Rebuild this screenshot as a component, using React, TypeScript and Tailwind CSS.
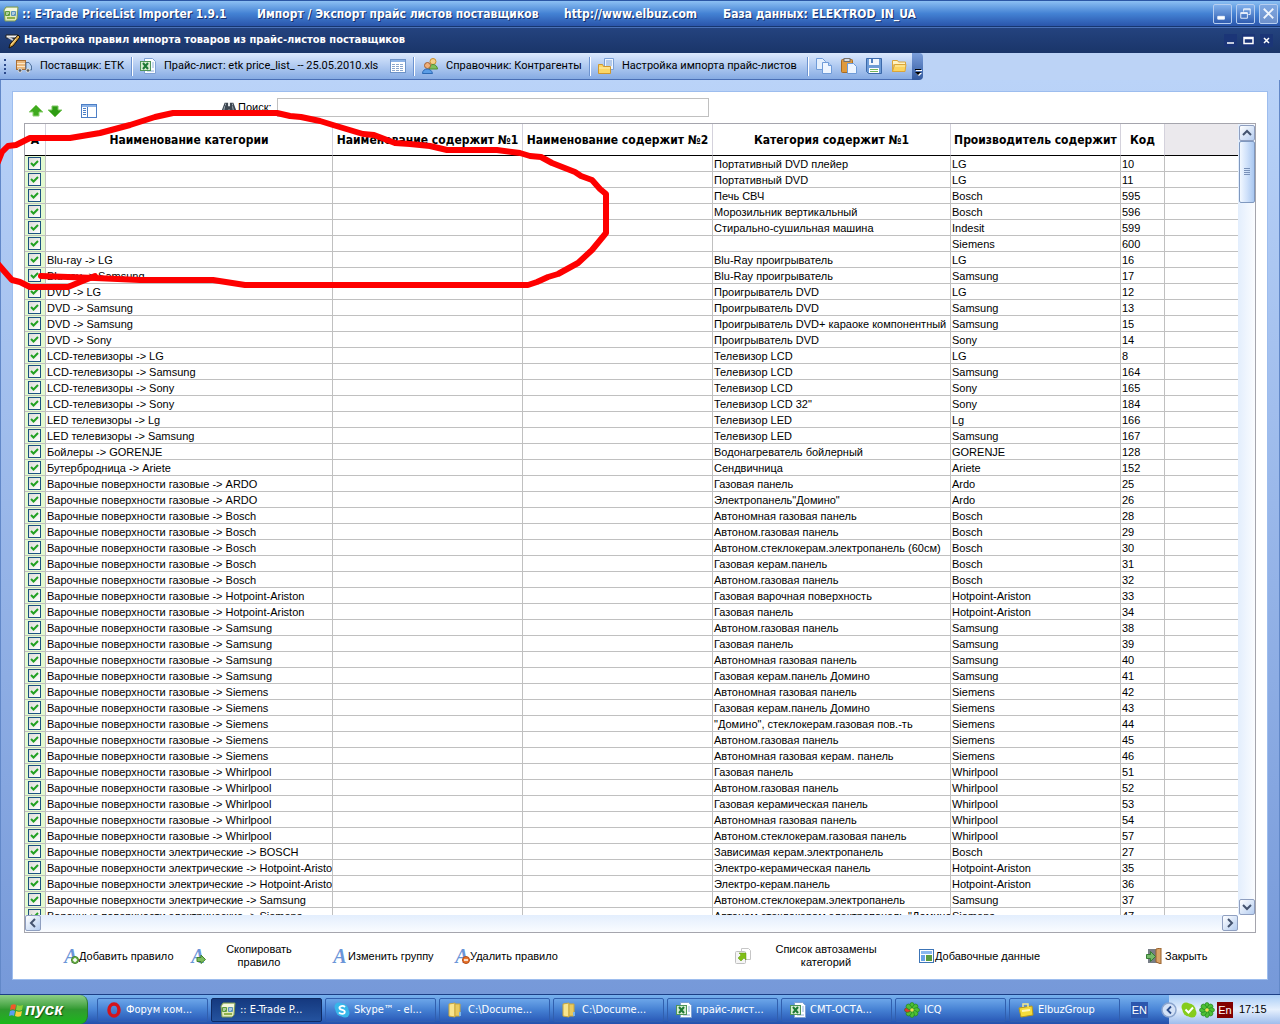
import * as React from "react"

interface Rule {
  category: string
  source: string
  vendor: string
  code: number
}

const GAS = "Варочные поверхности газовые -> "
const ELECTRIC = "Варочные поверхности электрические -> "

const rows: [string, string, string, number][] = [
  ["", "Портативный DVD плейер", "LG", 10],
  ["", "Портативный DVD", "LG", 11],
  ["", "Печь СВЧ", "Bosch", 595],
  ["", "Морозильник вертикальный", "Bosch", 596],
  ["", "Стирально-сушильная машина", "Indesit", 599],
  ["", "", "Siemens", 600],
  ["Blu-ray -> LG", "Blu-Ray проигрыватель", "LG", 16],
  ["Blu-ray -> Samsung", "Blu-Ray проигрыватель", "Samsung", 17],
  ["DVD -> LG", "Проигрыватель DVD", "LG", 12],
  ["DVD -> Samsung", "Проигрыватель DVD", "Samsung", 13],
  ["DVD -> Samsung", "Проигрыватель DVD+ караоке компонентный", "Samsung", 15],
  ["DVD -> Sony", "Проигрыватель DVD", "Sony", 14],
  ["LCD-телевизоры -> LG", "Телевизор LCD", "LG", 8],
  ["LCD-телевизоры -> Samsung", "Телевизор LCD", "Samsung", 164],
  ["LCD-телевизоры -> Sony", "Телевизор LCD", "Sony", 165],
  ["LCD-телевизоры -> Sony", 'Телевизор LCD 32"', "Sony", 184],
  ["LED телевизоры -> Lg", "Телевизор LED", "Lg", 166],
  ["LED телевизоры -> Samsung", "Телевизор LED", "Samsung", 167],
  ["Бойлеры -> GORENJE", "Водонагреватель бойлерный", "GORENJE", 128],
  ["Бутербродница -> Ariete", "Сендвичница", "Ariete", 152],
  [GAS + "ARDO", "Газовая панель", "Ardo", 25],
  [GAS + "ARDO", 'Электропанель"Домино"', "Ardo", 26],
  [GAS + "Bosch", "Автономная газовая панель", "Bosch", 28],
  [GAS + "Bosch", "Автоном.газовая панель", "Bosch", 29],
  [GAS + "Bosch", "Автоном.стеклокерам.электропанель (60см)", "Bosch", 30],
  [GAS + "Bosch", "Газовая керам.панель", "Bosch", 31],
  [GAS + "Bosch", "Автоном.газовая панель", "Bosch", 32],
  [GAS + "Hotpoint-Ariston", "Газовая варочная поверхность", "Hotpoint-Ariston", 33],
  [GAS + "Hotpoint-Ariston", "Газовая панель", "Hotpoint-Ariston", 34],
  [GAS + "Samsung", "Автоном.газовая панель", "Samsung", 38],
  [GAS + "Samsung", "Газовая панель", "Samsung", 39],
  [GAS + "Samsung", "Автономная газовая панель", "Samsung", 40],
  [GAS + "Samsung", "Газовая керам.панель Домино", "Samsung", 41],
  [GAS + "Siemens", "Автономная газовая панель", "Siemens", 42],
  [GAS + "Siemens", "Газовая керам.панель Домино", "Siemens", 43],
  [GAS + "Siemens", '"Домино", стеклокерам.газовая пов.-ть', "Siemens", 44],
  [GAS + "Siemens", "Автоном.газовая панель", "Siemens", 45],
  [GAS + "Siemens", "Автономная газовая керам. панель", "Siemens", 46],
  [GAS + "Whirlpool", "Газовая панель", "Whirlpool", 51],
  [GAS + "Whirlpool", "Автоном.газовая панель", "Whirlpool", 52],
  [GAS + "Whirlpool", "Газовая керамическая панель", "Whirlpool", 53],
  [GAS + "Whirlpool", "Автономная газовая панель", "Whirlpool", 54],
  [GAS + "Whirlpool", "Автоном.стеклокерам.газовая панель", "Whirlpool", 57],
  [ELECTRIC + "BOSCH", "Зависимая керам.электропанель", "Bosch", 27],
  [ELECTRIC + "Hotpoint-Ariston", "Электро-керамическая панель", "Hotpoint-Ariston", 35],
  [ELECTRIC + "Hotpoint-Ariston", "Электро-керам.панель", "Hotpoint-Ariston", 36],
  [ELECTRIC + "Samsung", "Автоном.стеклокерам.электропанель", "Samsung", 37],
  [ELECTRIC + "Siemens", 'Автоном.стеклокерам.электропанель "Домино"', "Siemens", 47],
]

const rules: Rule[] = rows.map(([category, source, vendor, code]) => ({ category, source, vendor, code }))

const Icon: React.FC<{ children: React.ReactNode; className?: string }> = ({ children, className }) => (
  <svg viewBox="0 0 16 16" className={className ?? "w-4 h-4 shrink-0"} aria-hidden="true">
    {children}
  </svg>
)

const AppIcon = () => (
  <Icon>
    <path d="M3 1h12l-1 12-2 2H2L1 4z" fill="#dfe9b8" stroke="#7c9a55" />
    <path d="M2 4l2-2h10v3H2z" fill="#f4f8dd" />
    <rect x="2" y="5" width="5" height="5" rx="1" fill="#5d9b3c" />
    <rect x="8" y="5" width="5" height="5" rx="1" fill="#5b93bd" />
    <path d="M3 7h3M9 7h3M4 8v1M10 8v1" stroke="#fff" />
    <path d="M4 12h8" stroke="#8fb04c" strokeWidth="2" />
  </Icon>
)

const RuleIcon = () => (
  <Icon>
    <path d="M1 2h12v3H1z" fill="#f4f4f4" stroke="#222" />
    <path d="M13 2l2 2-7 9-4 2 1-4z" fill="#d9a441" stroke="#16120c" />
    <path d="M3 4l5 3" stroke="#ccc" strokeWidth="2" />
    <path d="M6 12l5-6" stroke="#fbe3a0" />
  </Icon>
)

const TruckIcon = () => (
  <Icon>
    <rect x="0.5" y="2.5" width="9" height="9" fill="#e9b77c" stroke="#a96d34" />
    <path d="M1 5.5h8M1 8.5h8" stroke="#fbe6c8" />
    <path d="M10 4.500h3l2.500 3.500v4H10z" fill="#b7d3f5" stroke="#53739f" />
    <circle cx="4" cy="12.500" r="1.800" fill="#555" stroke="#ddd" />
    <circle cx="12" cy="12.500" r="1.800" fill="#555" stroke="#ddd" />
  </Icon>
)

const ExcelIcon = () => (
  <Icon>
    <path d="M4.500 0.500h8l3 3v12h-11z" fill="#fbfdff" stroke="#7fa1d4" />
    <path d="M12 5h2M12 7h2M12 9h2M7 13h7" stroke="#8fb0d9" />
    <rect x="0.500" y="3.500" width="10" height="9" fill="#d7ecd1" stroke="#4f9558" />
    <path d="M3 5l5 6M8 5l-5 6" stroke="#1f7a35" strokeWidth="2" />
  </Icon>
)

const GridIcon = () => (
  <Icon>
    <rect x="0.500" y="1.500" width="15" height="13" fill="#fff" stroke="#6d93c8" />
    <path d="M1 3h14" stroke="#8db3e6" strokeWidth="2" />
    <path d="M2 6.500h12M2 8.500h12M2 10.500h12M2 12.500h12" stroke="#8ba6cc" strokeDasharray="3 1" />
  </Icon>
)

const PeopleIcon = () => (
  <Icon>
    <circle cx="11" cy="3.500" r="3" fill="#f4cf8b" stroke="#c98f2d" />
    <path d="M7 11c0-6 8-6 8.500 0z" fill="#7fc05c" stroke="#4f8f35" />
    <circle cx="5.500" cy="7.500" r="3" fill="#eeb07c" stroke="#a5602f" />
    <path d="M0.500 15.500c0-6 9-6 10 0z" fill="#5b9de6" stroke="#2c69b4" />
  </Icon>
)

const FolderDocIcon = () => (
  <Icon>
    <path d="M6.500 0.500h9v11h-9z" fill="#eef5ff" stroke="#7ba0d6" />
    <path d="M8 3h6M8 5h6M8 7h6" stroke="#7ba0d6" />
    <path d="M0.500 6.500h4l1 2h7v7h-12z" fill="#fbd767" stroke="#d0982e" />
    <path d="M1 10h11" stroke="#fff0b5" />
  </Icon>
)

const CopyIcon = () => (
  <Icon>
    <path d="M0.500 0.500h6l3 3v8h-9z" fill="#e4effd" stroke="#6f9bd8" />
    <path d="M6.500 4.500h6l3 3v8h-9z" fill="#eef5ff" stroke="#6f9bd8" />
    <path d="M12.500 4.500v3h3" fill="#bad4f5" stroke="#6f9bd8" />
  </Icon>
)

const PasteIcon = () => (
  <Icon>
    <rect x="0.500" y="1.500" width="11" height="13" rx="1" fill="#e09a3c" stroke="#a86b22" />
    <rect x="3" y="0.500" width="6" height="3" fill="#d8dde6" stroke="#76716b" />
    <path d="M6.500 5.500h6l3 3v7h-9z" fill="#eef5ff" stroke="#6f9bd8" />
  </Icon>
)

const SaveIcon = () => (
  <Icon>
    <path d="M0.500 0.500h15v15h-13l-2-2z" fill="#6d9bd6" stroke="#3b69aa" />
    <rect x="3" y="1" width="10" height="6" fill="#f1f6fd" />
    <rect x="5" y="1" width="2" height="4" fill="#4d7dbd" />
    <rect x="3" y="10" width="10" height="5" fill="#fff" />
    <path d="M4 11.500h8M4 13.500h8" stroke="#75b45d" />
  </Icon>
)

const FolderIcon = () => (
  <Icon>
    <path d="M1.500 2.500h5l1 1.500h7v3h-13z" fill="#fff3c2" stroke="#daa53b" />
    <path d="M1.500 13.500v-10M3.500 6.500h11.500l-1 7h-12.500z" fill="#fbd45f" stroke="#daa53b" />
    <path d="M4 8h10" stroke="#fff0b0" />
  </Icon>
)

const BinocularsIcon = () => (
  <Icon className="w-[14px] h-[14px] shrink-0">
    <path d="M3 2h4v4h2V2h4l3 8v4h-7v-4H7v4H0v-4z" fill="#3d4650" />
    <path d="M3 6l-1 5M12 6l1 5M4 3v2M12 3v2" stroke="#aeb9c4" />
  </Icon>
)

// Letter "A" glyph used by the rule buttons, with a small badge in the corner
const LetterIcon: React.FC<{ badge?: "add" | "copy" | "remove" }> = ({ badge }) => (
  <span className="grid w-4 h-4 shrink-0 place-items-center text-[20px] leading-4 font-bold italic text-[#6b95d8] [font-family:'Liberation_Serif',serif]">
    <span className="[grid-area:1/1]">A</span>
    {badge && (
      <Icon className="z-10 w-4 h-4 [grid-area:1/1]">
        {badge === "add" && (
          <>
            <circle cx="12" cy="12" r="3.500" fill="#76b852" stroke="#3f8127" />
            <path d="M12 10v4M10 12h4" stroke="#fff" strokeWidth="1.500" />
          </>
        )}
        {badge === "remove" && (
          <>
            <circle cx="12" cy="12" r="3.500" fill="#e9762f" stroke="#b14a12" />
            <path d="M10 12h4" stroke="#fff" strokeWidth="1.500" />
          </>
        )}
        {badge === "copy" && <path d="M7 9.500h4V7l4.500 4.500-4.500 4V13.500H7z" fill="#7dbd5d" stroke="#41832c" />}
      </Icon>
    )}
  </span>
)

const ReplaceIcon = () => (
  <Icon>
    <path d="M6.500 0.500h7l2 2v9h-9z" fill="#fff" stroke="#c6c6c6" />
    <rect x="0.500" y="3.500" width="10" height="12" rx="1" fill="#f5f5f5" stroke="#c0c0c0" />
    <path d="M4 5h7v7L9 10l-3 3-3-3 3-3z" fill="#80bf16" stroke="#5f9710" strokeWidth="0.500" />
  </Icon>
)

const DataIcon = () => (
  <Icon>
    <rect x="0.500" y="1.500" width="14" height="13" fill="#fff" stroke="#3c74b6" />
    <rect x="2" y="3" width="11" height="3" fill="#8ab8ee" />
    <rect x="2" y="7" width="4" height="6" fill="#69a3e6" />
    <rect x="7" y="7" width="6" height="6" fill="#5b9c40" />
  </Icon>
)

const DoorIcon = () => (
  <Icon>
    <rect x="2" y="1" width="13" height="14" fill="#777d86" />
    <path d="M10 1l5-1v16l-5-2z" fill="#d9a467" stroke="#97602c" />
    <path d="M0.500 6.500h4v-3l5 5-5 5v-3h-4z" fill="#74ba6a" stroke="#367c33" />
  </Icon>
)

const UpIcon = () => (
  <Icon>
    <path d="M8 2l7 7h-4v4H5V9H1z" fill="#3faa1e" stroke="#8fd174" />
  </Icon>
)

const DownIcon = () => (
  <Icon>
    <path d="M8 14l7-7h-4V3H5v4H1z" fill="#2f9c14" stroke="#7cc761" />
  </Icon>
)

const PaneIcon = () => (
  <Icon>
    <rect x="0.500" y="1.500" width="15" height="13" fill="#fff" stroke="#4d7fc6" />
    <path d="M1 3h14" stroke="#8db3e6" strokeWidth="2" />
    <path d="M6.500 4v10" stroke="#4d7fc6" />
    <path d="M2 5.500h3M2 7.500h3M2 9.500h3M2 11.500h3" stroke="#4d7fc6" />
  </Icon>
)

const OperaIcon = () => (
  <Icon>
    <ellipse cx="8" cy="8" rx="5" ry="6" fill="none" stroke="#d3141b" strokeWidth="3.500" />
  </Icon>
)

const SkypeIcon = () => (
  <Icon>
    <circle cx="5" cy="5" r="4.500" fill="#38b6ea" />
    <circle cx="11" cy="11" r="4.500" fill="#38b6ea" />
    <circle cx="8" cy="8" r="6.500" fill="#38b6ea" />
    <path d="M11 5C9 3 5 4 5.500 6.200 6 8.500 11 7.300 10.800 10 10.500 12.500 6.500 12.300 5 10.500" fill="none" stroke="#fff" strokeWidth="1.800" />
  </Icon>
)

const YellowFolderIcon = () => (
  <Icon>
    <path d="M1 2l6-1v14l-6-1z" fill="#f8e48e" stroke="#c8a63d" />
    <path d="M7 2h5v12H7z" fill="#e8ca60" stroke="#c8a63d" />
    <path d="M11 10h2v4h-2z" fill="#7db6e6" />
  </Icon>
)

const FlowerIcon: React.FC<{ tray?: boolean }> = ({ tray }) => (
  <Icon>
    {[0, 45, 90, 135, 180, 225, 270, 315].map((angle) => (
      <ellipse
        key={angle}
        cx="8"
        cy="3.500"
        rx="2.300"
        ry="3"
        fill={!tray && angle === 270 ? "#e23a2a" : "#4dc035"}
        stroke="#1f7a1b"
        strokeWidth="0.600"
        transform={`rotate(${angle} 8 8)`}
      />
    ))}
    <circle cx="8" cy="8" r="1.800" fill="#f3e04d" />
  </Icon>
)

const CardIcon = () => (
  <Icon>
    <path d="M1 6l13-2 1 9-12 2z" fill="#f5dc3c" stroke="#b89a1c" />
    <path d="M5 5V2h5v3" fill="none" stroke="#f5e98c" strokeWidth="1.500" />
    <path d="M4 9l8-1" stroke="#fff8b8" strokeWidth="2" />
  </Icon>
)

const FlagIcon = () => (
  <Icon>
    <path d="M2 3c2-1 4-1 5 0L6 8C5 7 3 7 1 8z" fill="#f0582a" />
    <path d="M8 3c2 1 4 1 6 0l-1 5c-2 1-4 1-6 0z" fill="#8dd03a" />
    <path d="M1 9c2-1 4-1 5 0l-1 5c-1-1-3-1-5 0z" fill="#5b9df0" />
    <path d="M7 9c2 1 4 1 6 0l-1 5c-2 1-4 1-6 0z" fill="#fbce3a" />
  </Icon>
)

const Separator = () => <span className="h-[19px] w-[2px] border-l border-[#6c93d0] bg-white" />

const toolbarButton = "flex h-full items-center gap-2 whitespace-nowrap"

const Toolbar: React.FC = () => (
  <div className="flex h-[27px] bg-[#bcd3f6] text-[11px] [font-family:Roboto,sans-serif]">
    <div className="flex w-[912px] items-center border-b border-[#4a6fb5] bg-linear-to-b from-[#dce9fd] to-[#86abe3] pl-1">
      <span className="mr-[10px] h-[15px] border-l-2 border-dotted border-[#2c4a8c]" />
      <button className={`${toolbarButton} w-[115px]`}>
        <TruckIcon />
        Поставщик: ЕТК
      </button>
      <Separator />
      <button className={`${toolbarButton} ml-[7px] w-[241px]`}>
        <ExcelIcon />
        Прайс-лист: etk price_list_ -- 25.05.2010.xls
      </button>
      <button className={`${toolbarButton} ml-[9px] mr-[7px]`} aria-label="Таблица">
        <GridIcon />
      </button>
      <Separator />
      <button className={`${toolbarButton} ml-[7px] w-[167px]`}>
        <PeopleIcon />
        Справочник: Контрагенты
      </button>
      <Separator />
      <button className={`${toolbarButton} ml-[7px] w-[209px]`}>
        <FolderDocIcon />
        Настройка импорта прайс-листов
      </button>
      <Separator />
      <div className="ml-[7px] flex gap-[9px]">
        <button aria-label="Копировать"><CopyIcon /></button>
        <button aria-label="Вставить"><PasteIcon /></button>
        <button aria-label="Сохранить"><SaveIcon /></button>
        <button aria-label="Открыть"><FolderIcon /></button>
      </div>
    </div>
    <button
      className="flex w-[11px] items-end justify-center rounded-r-sm bg-linear-to-b from-[#7a9edb] to-[#335a9f] pb-1"
      aria-label="Параметры панели"
    >
      <svg viewBox="0 0 8 8" className="h-2 w-2" aria-hidden="true">
        <path d="M2 2h6v1H2zM2 5h6L5 8z" fill="#fff" />
        <path d="M1 1h6v1H1zM1 4h6L4 7z" fill="#000" />
      </svg>
    </button>
  </div>
)

const headerCell = "border-r border-[#d4d2dc] border-b border-b-black p-0 text-center whitespace-nowrap"
const cell = "overflow-hidden border-r border-b border-[#c0c0c0] p-0 pt-px pl-px whitespace-nowrap"

const RulesTable: React.FC = () => (
  <table className="w-full table-fixed border-separate border-spacing-0 text-[11px] leading-[14px]">
    <colgroup>
      <col className="w-[21px]" />
      <col className="w-[287px]" />
      <col className="w-[190px]" />
      <col className="w-[190px]" />
      <col className="w-[238px]" />
      <col className="w-[170px]" />
      <col className="w-[44px]" />
      <col />
    </colgroup>
    <thead className="text-[12px] [font-family:'DejaVu_Sans_Condensed',sans-serif]">
      <tr className="h-8">
        <th className={headerCell}>А</th>
        <th className={headerCell}>Наименование категории</th>
        <th className={headerCell}>Наименование содержит №1</th>
        <th className={headerCell}>Наименование содержит №2</th>
        <th className={headerCell}>Категория содержит №1</th>
        <th className={headerCell}>Производитель содержит</th>
        <th className={headerCell}>Код</th>
        <th className="border-b border-black bg-[#ebe9ed] p-0" />
      </tr>
    </thead>
    <tbody>
      {rules.map((rule) => (
        <tr key={rule.code} className="h-4">
          <td className="border-r border-b border-[#c0c0c0] bg-[#e2fad0] p-0">
            <label className="grid h-[15px] place-items-center pr-px">
              <input
                type="checkbox"
                defaultChecked
                aria-label={`Правило ${rule.code}`}
                className="peer h-[13px] w-[13px] appearance-none border border-[#1c5180] bg-linear-to-br from-[#dcdcd7] to-white [grid-area:1/1]"
              />
              <svg viewBox="0 0 9 9" className="invisible z-10 h-[9px] w-[9px] [grid-area:1/1] peer-checked:visible" aria-hidden="true">
                <path d="M1 4l2.500 2.500L8 2" fill="none" stroke="#21a121" strokeWidth="2" />
              </svg>
            </label>
          </td>
          <td className={cell}>{rule.category}</td>
          <td className={cell} />
          <td className={cell} />
          <td className={cell}>{rule.source}</td>
          <td className={cell}>{rule.vendor}</td>
          <td className={cell}>{rule.code}</td>
          <td className="border-b border-[#c0c0c0] p-0" />
        </tr>
      ))}
    </tbody>
  </table>
)

const ScrollButton: React.FC<{ label: string; path: string }> = ({ label, path }) => (
  <button
    aria-label={label}
    className="grid h-4 w-4 shrink-0 place-items-center rounded-xs border border-[#8f9fc0] bg-linear-to-br from-white to-[#b5cdf0]"
  >
    <svg viewBox="0 0 10 10" className="h-[10px] w-[10px]" aria-hidden="true">
      <path d={path} fill="none" stroke="#44536f" strokeWidth="2" />
    </svg>
  </button>
)

const actionButton = "flex h-8 items-center text-left whitespace-nowrap"

const ActionBar: React.FC = () => (
  <div className="flex h-[46px] shrink-0 items-center pl-[50px] text-[11px] leading-[13px]">
    <button className={`${actionButton} w-[127px]`}>
      <LetterIcon badge="add" />
      Добавить правило
    </button>
    <button className={`${actionButton} w-[142px]`}>
      <LetterIcon badge="copy" />
      <span className="ml-[17px] w-[72px] text-center whitespace-normal">Скопировать правило</span>
    </button>
    <button className={`${actionButton} w-[122px]`}>
      <LetterIcon />
      Изменить группу
    </button>
    <button className={actionButton}>
      <LetterIcon badge="remove" />
      Удалить правило
    </button>
    <button className={`${actionButton} ml-auto w-[184px]`}>
      <ReplaceIcon />
      <span className="ml-[20px] w-[110px] text-center whitespace-normal">Список автозамены категорий</span>
    </button>
    <button className={`${actionButton} w-[227px]`}>
      <DataIcon />
      Добавочные данные
    </button>
    <button className={`${actionButton} w-[121px] gap-[3px]`}>
      <DoorIcon />
      Закрыть
    </button>
  </div>
)

const tasks = [
  { icon: <OperaIcon />, text: "Форум ком..." },
  { icon: <AppIcon />, text: ":: E-Trade P...", active: true },
  { icon: <SkypeIcon />, text: "Skype™ - el..." },
  { icon: <YellowFolderIcon />, text: "C:\\Docume..." },
  { icon: <YellowFolderIcon />, text: "C:\\Docume..." },
  { icon: <ExcelIcon />, text: "прайс-лист..." },
  { icon: <ExcelIcon />, text: "СМТ-ОСТА..." },
  { icon: <FlowerIcon />, text: "ICQ" },
  { icon: <CardIcon />, text: "ElbuzGroup" },
]

const Taskbar: React.FC = () => (
  <footer className="flex h-[30px] shrink-0 items-stretch border-t border-[#1c3f86] bg-linear-to-b from-[#78b1ee] via-[#4a86d8] to-[#2350ac] text-[11px] text-white">
    <button className="flex w-[88px] items-center rounded-r-lg border-r border-[#2b7a2b] bg-linear-to-b from-[#8ccf86] via-[#2f9a2f] to-[#18b818] pl-[9px] text-[17px] leading-[18px] font-bold italic [text-shadow:1px_1px_1px_#145014]">
      <FlagIcon />
      пуск
    </button>
    <nav className="ml-[9px] flex min-w-0 flex-1 items-start gap-[3px] pt-[3px] [font-family:'DejaVu_Sans_Condensed',sans-serif]">
      {tasks.map((task, i) => (
        <button
          key={i}
          className={`flex h-6 w-[111px] min-w-0 items-center gap-1 rounded-xs border pl-[8px] whitespace-nowrap ${
            task.active
              ? "border-[#0f2a63] bg-linear-to-b from-[#15397f] to-[#24539f]"
              : "border-[#315fae] bg-linear-to-b from-[#6ca6e9] via-[#4580d3] to-[#2b5bb8]"
          }`}
        >
          {task.icon}
          {task.text}
        </button>
      ))}
    </nav>
    <span className="mr-[21px] self-center bg-[#2c56ad] px-[1px] leading-4">EN</span>
    <div className="flex w-[111px] items-center gap-[2px] bg-linear-to-b from-[#a9cdf6] via-[#e6f0fd] to-[#9fbdec] text-black">
      <button aria-label="Показать скрытые значки" className="-ml-2">
        <Icon>
          <circle cx="8" cy="8" r="7" fill="#d4e2f7" stroke="#8aa4ce" strokeWidth="1.500" />
          <path d="M10 4.500L6.500 8l3.500 3.500" fill="none" stroke="#2b4c8a" strokeWidth="1.800" />
        </Icon>
      </button>
      <Icon className="ml-[2px] h-4 w-4 shrink-0">
        <circle cx="5" cy="5" r="4.500" fill="#86cc1c" />
        <circle cx="11" cy="11" r="4.500" fill="#86cc1c" />
        <circle cx="8" cy="8" r="6.500" fill="#86cc1c" />
        <path d="M4.500 7.500L7.500 10.500 12 5.500" fill="none" stroke="#fff" strokeWidth="2" />
      </Icon>
      <FlowerIcon tray />
      <span className="w-4 shrink-0 bg-[#820000] text-center leading-4 text-white">En</span>
      <span className="ml-1">17:15</span>
    </div>
  </footer>
)

const TitleBar: React.FC = () => (
  <header className="flex h-[27px] shrink-0 items-center border-t border-[#2b57a5] border-b border-b-[#17366f] bg-linear-to-b from-[#8cc0f3] via-[#4482d4] to-[#2a55ab] pr-[2px] pl-[3px] text-[12px] font-bold whitespace-pre text-white [font-family:'DejaVu_Sans_Condensed',sans-serif] [text-shadow:1px_1px_0_#16306b]">
    <AppIcon />
    <h1 className="ml-[3px] flex">
      <span className="w-[235px]">:: E-Trade PriceList Importer 1.9.1</span>
      <span className="w-[307px]">Импорт / Экспорт прайс листов поставщиков</span>
      <span className="w-[159px]">http://www.elbuz.com</span>
      <span>База данных: ELEKTROD_IN_UA</span>
    </h1>
    <div className="ml-auto flex gap-1">
      {[
        { label: "Свернуть", path: "M4 12h7v3H4z", fill: "#fff" },
        { label: "Восстановить", path: "M4 8h7v6H4zM4 9h7M7 7V4h7v6h-2M7 5h7", fill: "none" },
        { label: "Закрыть окно", path: "M4 4l10 10M14 4L4 14", fill: "none" },
      ].map((b) => (
        <button
          key={b.label}
          aria-label={b.label}
          className="h-5 w-[19px] rounded-xs border border-[#b6cef0] bg-linear-to-b from-[#82b1ec] to-[#2f5cb0] last:from-[#7fa8e2] last:to-[#6d90cb]"
        >
          <svg viewBox="0 0 18 18" className="h-[17px] w-[17px]" aria-hidden="true">
            <path d={b.path} fill={b.fill} stroke="#eef4fd" strokeWidth={b.label === "Закрыть окно" ? 2 : 1} />
          </svg>
        </button>
      ))}
    </div>
  </header>
)

const MdiBar: React.FC = () => (
  <div className="flex h-[26px] shrink-0 items-center border-t border-[#4a72b8] bg-linear-to-b from-[#24437f] to-[#1a3569] pr-[7px] pl-[5px] text-[11px] font-bold text-white [font-family:'DejaVu_Sans_Condensed',sans-serif]">
    <RuleIcon />
    <h2 className="ml-[3px]">Настройка правил импорта товаров из прайс-листов поставщиков</h2>
    <div className="ml-auto flex gap-[5px]">
      {[
        { label: "Свернуть форму", path: "M3 9h7" },
        { label: "Развернуть форму", path: "M2 3.500h9v6H2zM2 4.500h9" },
        { label: "Закрыть форму", path: "M4 4l5 5M9 4l-5 5" },
      ].map((b) => (
        <button key={b.label} aria-label={b.label} className="bg-[#1b3577]">
          <svg viewBox="0 0 13 13" className="h-[13px] w-[13px]" aria-hidden="true">
            <path d={b.path} fill="none" stroke="#fff" strokeWidth="1.500" />
          </svg>
        </button>
      ))}
    </div>
  </div>
)

// Freehand marker loop drawn over the empty category rows
const MarkerLoop = () => (
  <svg viewBox="0 0 640 300" className="pointer-events-none absolute top-0 left-0 z-20 h-[300px] w-[640px]" aria-hidden="true">
    <g fill="none" stroke="#fe0000" strokeWidth="6" strokeLinecap="round" strokeLinejoin="round">
      <path d="M-2 162L2 152 8 146 16 145 30 138H70L100 133 130 125 155 117 173 113H277L290 116 301 117 320 121 333 125 363 134 374 135 395 143 410 144 430 146 447 150H497L520 153 530 156 541 157 552 163 575 172 581 176 592 180 600 189 606 194V233L592 250 578 263 558 274 548 277 537 282 528 285H245L213 280H140L95 278 41 276" />
      <path d="M-2 264L4 271 12 280 20 282 30 287H68L80 282 95 276" />
    </g>
  </svg>
)

export default function App() {
  return (
    <div className="relative flex h-screen flex-col overflow-hidden text-black [font-family:'Liberation_Sans',sans-serif]">
      <TitleBar />
      <MdiBar />
      <Toolbar />
      <main className="flex min-h-0 flex-1 flex-col border-x border-[#6288c8] bg-linear-to-b from-[#bad3f8] to-[#7699d9] px-[11px] pt-[11px] pb-[14px]">
        <section className="flex min-h-0 flex-1 flex-col border border-[#9dbdee] bg-white">
          <div className="flex h-[31px] shrink-0 pl-[15px] text-[11px]">
            <div className="flex items-center gap-[3px] pt-[6px]">
              <button aria-label="Вверх"><UpIcon /></button>
              <button aria-label="Вниз"><DownIcon /></button>
              <button aria-label="Вид" className="ml-[15px]"><PaneIcon /></button>
            </div>
            <label htmlFor="search" className="ml-[125px] flex w-[55px] items-center gap-[2px]">
              <BinocularsIcon />
              Поиск:
            </label>
            <input id="search" type="text" className="mt-[6px] h-[19px] w-[432px] border border-[#c0c0c0] px-1 outline-none" />
          </div>
          <div className="mx-[11px] flex min-h-0 flex-1 flex-col border border-[#a5a5ad]">
            <div className="flex min-h-0 flex-1">
              <div className="min-w-0 flex-1 overflow-hidden">
                <RulesTable />
              </div>
              <div className="flex w-[17px] flex-col items-center bg-linear-to-r from-[#e3eefd] to-[#fafcff] pt-px">
                <ScrollButton label="Прокрутить вверх" path="M1 7l4-4 4 4" />
                <div className="grid h-[62px] w-4 place-items-center rounded-xs border border-[#7f98bf] bg-linear-to-r from-[#f2f8ff] via-[#cfe1fa] to-[#a9c7f0]">
                  <svg viewBox="0 0 6 8" className="h-2 w-[6px]" aria-hidden="true">
                    <path d="M0 0.500h6M0 2.500h6M0 4.500h6M0 6.500h6" stroke="#7890b8" />
                  </svg>
                </div>
                <div className="flex-1" />
                <ScrollButton label="Прокрутить вниз" path="M1 3l4 4 4-4" />
              </div>
            </div>
            <div className="flex h-[17px] shrink-0">
              <div className="flex flex-1 justify-between bg-linear-to-b from-[#e3eefd] to-[#fafcff]">
                <ScrollButton label="Прокрутить влево" path="M7 1L3 5l4 4" />
                <ScrollButton label="Прокрутить вправо" path="M3 1l4 4-4 4" />
              </div>
              <div className="w-[17px] bg-white" />
            </div>
          </div>
          <ActionBar />
        </section>
      </main>
      <Taskbar />
      <MarkerLoop />
    </div>
  )
}
